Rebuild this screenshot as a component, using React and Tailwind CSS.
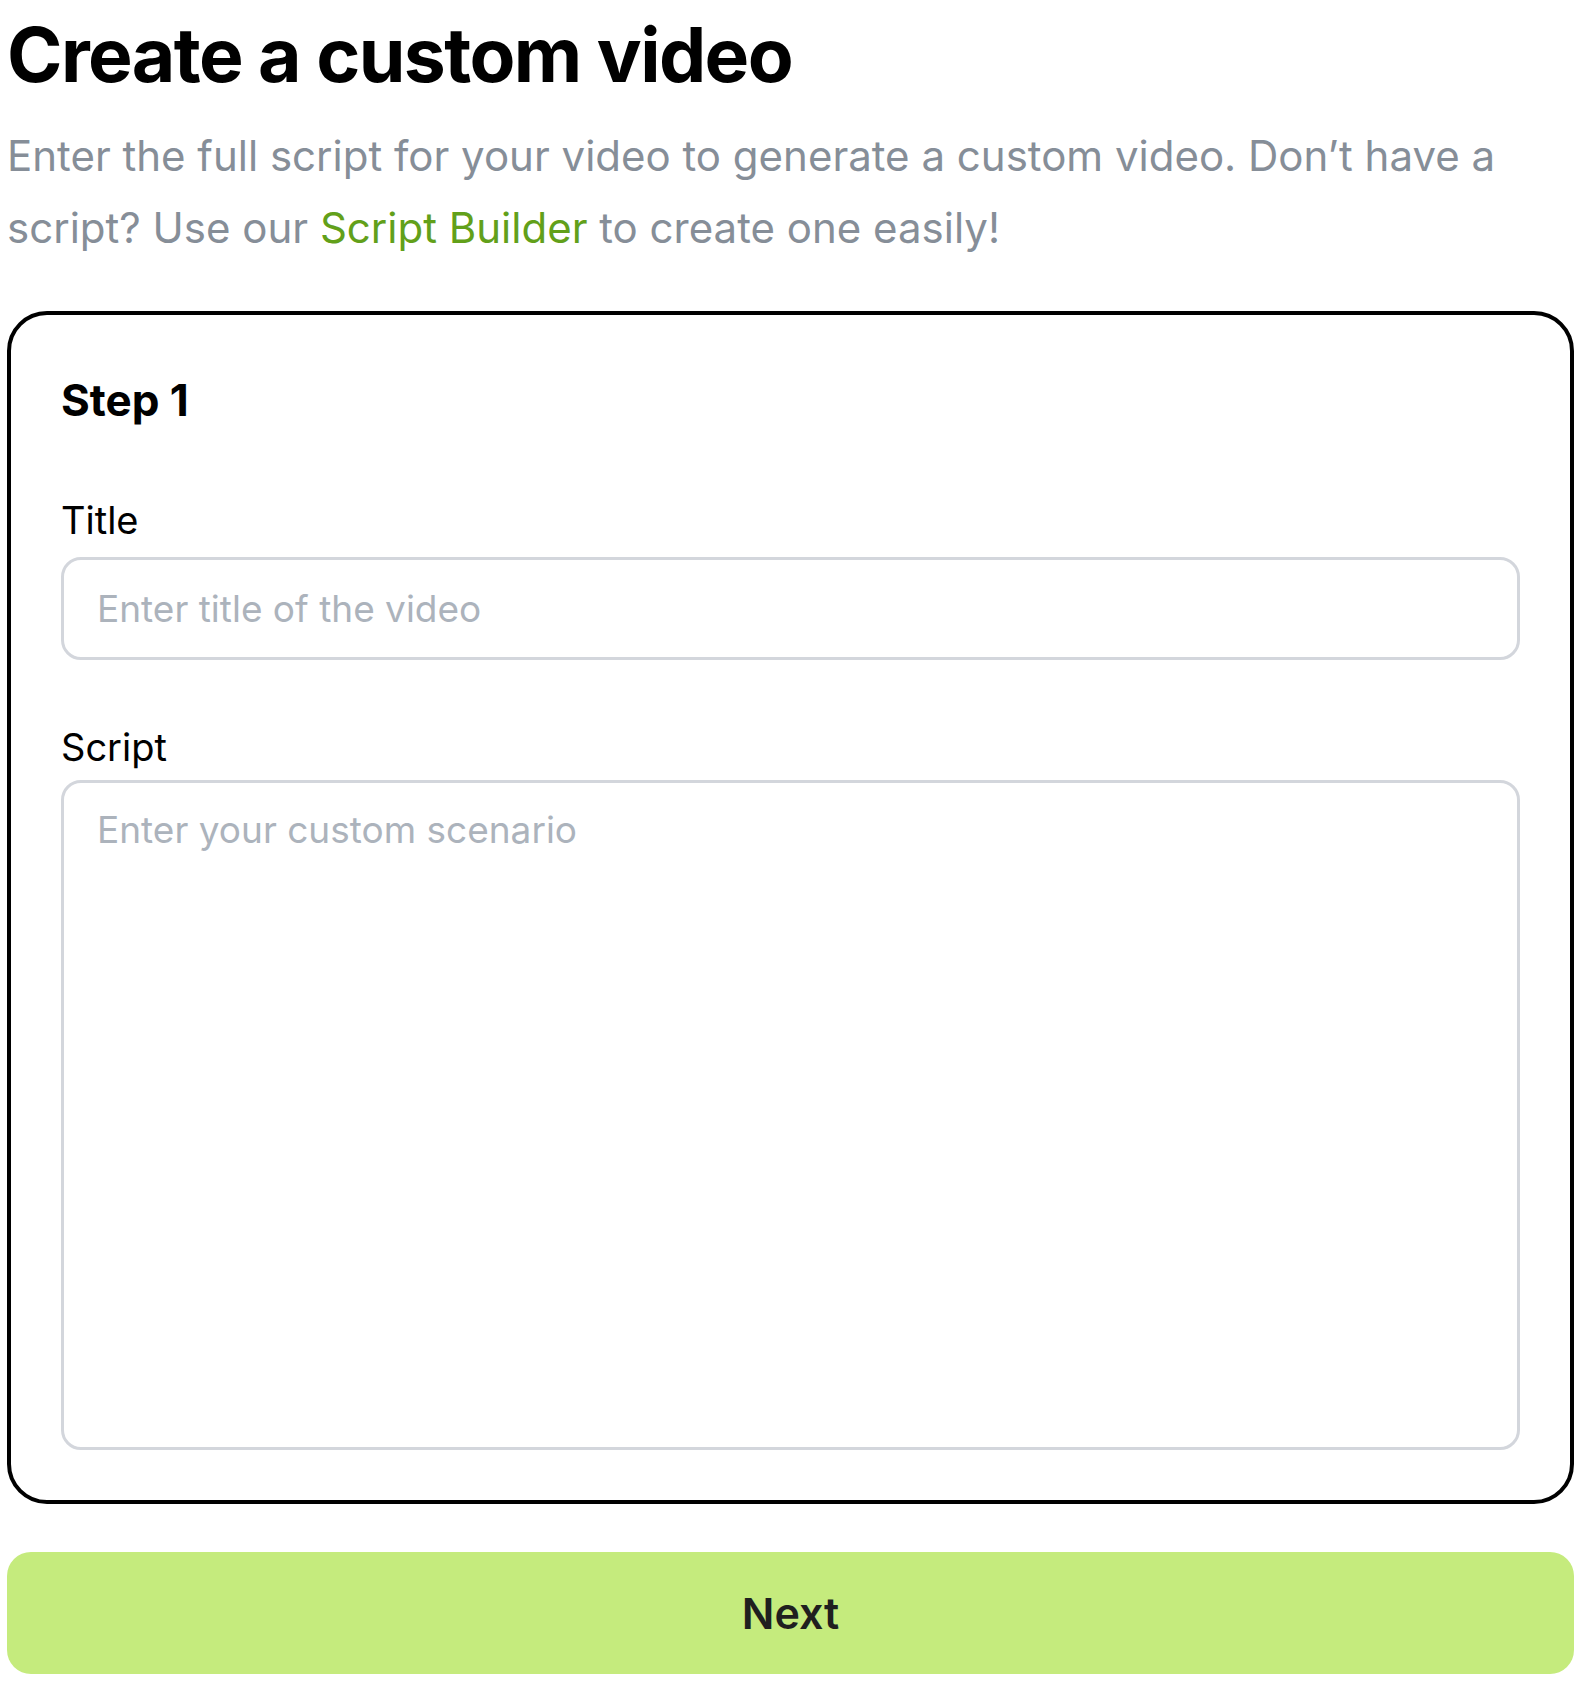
export default function App() {
  return (
    <div className="min-h-screen bg-white font-['Inter',sans-serif]">
      <div className="ml-[7px] w-[1567px] flex flex-col">
        <h1 className="text-[75px] leading-[110px] font-bold text-black tracking-[-1.6px]">
          Create a custom video
        </h1>
        <p className="mt-[10px] text-[42px] leading-[72px] text-[#868e98]">
          Enter the full script for your video to generate a custom video. Don’t have a script? Use our{' '}
          <span className="text-[#62a01a]">Script Builder</span> to create one easily!
        </p>

        <div className="mt-[47px] border-4 border-black rounded-[40px] px-[50px] pt-[50px] pb-[50px] flex flex-col">
          <h2 className="text-[44px] leading-[70px] font-bold text-black">Step 1</h2>

          <label className="mt-[61px] text-[38px] leading-[48px] text-black">Title</label>
          <input
            type="text"
            placeholder="Enter title of the video"
            className="mt-[13px] h-[103px] w-full border-[3px] border-[#d3d6dc] rounded-[20px] px-[33px] text-[37px] leading-[48px] text-black placeholder:text-[#acb3bc] outline-none"
          />

          <label className="mt-[63px] text-[38px] leading-[48px] text-black">Script</label>
          <textarea
            placeholder="Enter your custom scenario"
            className="mt-[9px] h-[670px] w-full resize-none border-[3px] border-[#d3d6dc] rounded-[20px] px-[33px] pt-[23px] text-[37px] leading-[48px] text-black placeholder:text-[#acb3bc] outline-none"
          />
        </div>

        <button className="mt-[48px] h-[122px] w-full rounded-[24px] bg-[#c5eb7d] text-[43px] font-semibold text-[#1f1f1f]">
          Next
        </button>
      </div>
    </div>
  );
}
